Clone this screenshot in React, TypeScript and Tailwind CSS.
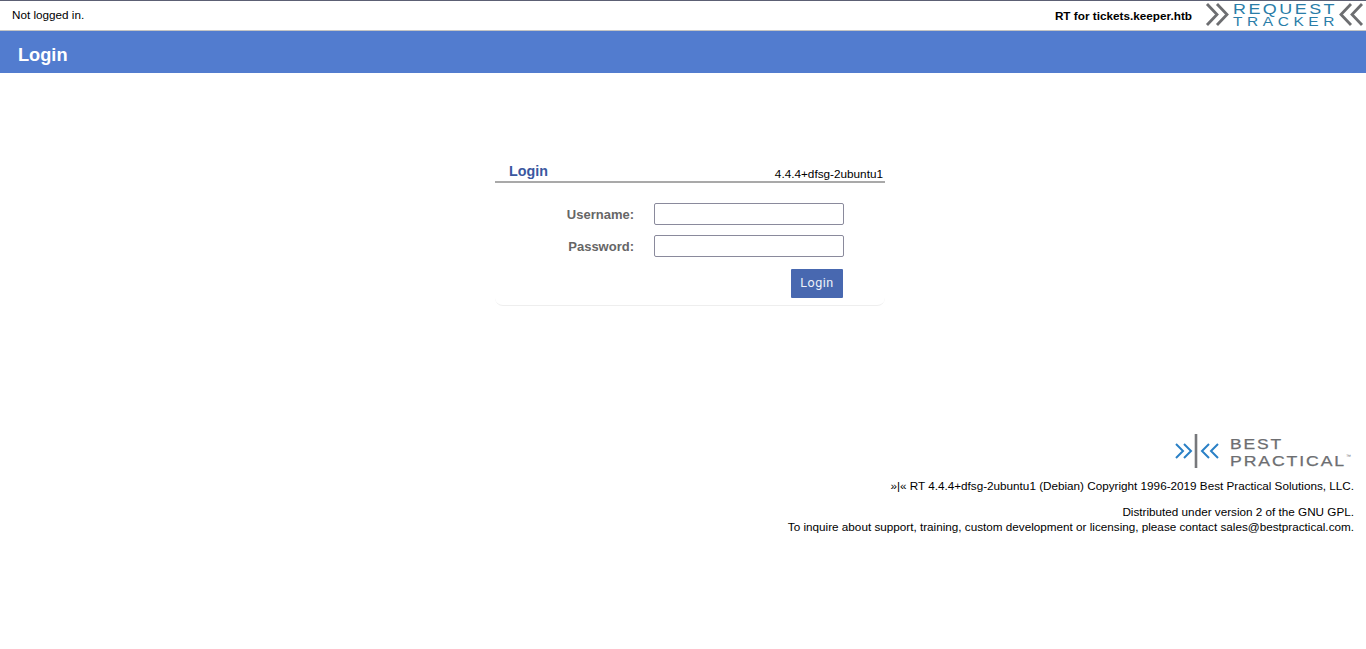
export default function App() {
  return (
    <div className="min-h-[649px] bg-white font-['Liberation_Sans',Arial,sans-serif] text-black">
      {/* Top bar */}
      <div className="flex h-[31px] items-start justify-between border-t border-b border-t-[#5c6074] border-b-[#c4c4c4] bg-white">
        <div className="ml-3 mt-[7px] text-[11.7px] leading-[14px]">Not logged in.</div>
        <div className="flex items-start">
          <div className="mt-2 text-[11.75px] font-bold leading-[14px]">RT for tickets.keeper.htb</div>
          <svg width="161" height="29" viewBox="0 0 161 29" className="ml-[13px] shrink-0" fill="none">
            <g stroke="#6d6e71" strokeWidth="2.8">
              <path d="M2 3 12 13.5 2 24" />
              <path d="M12 3 22 13.5 12 24" />
              <path d="M146 3 136 13.5 146 24" />
              <path d="M157 3 147 13.5 157 24" />
            </g>
            <g fill="#2a7da8" fontFamily="'Liberation Sans', sans-serif">
              <text x="28" y="13" fontSize="14.5" letterSpacing="2" textLength="104" lengthAdjust="spacingAndGlyphs">REQUEST</text>
              <text x="28" y="25" fontSize="13.5" letterSpacing="4" textLength="106" lengthAdjust="spacingAndGlyphs">TRACKER</text>
            </g>
          </svg>
        </div>
      </div>

      {/* Page title */}
      <div className="h-[42px] bg-[#527ccf] pl-[18px] pt-[13px] text-[18.2px] font-bold leading-[22px] text-white">Login</div>

      {/* Login box */}
      <div className="ml-[495px] mt-[89px] w-[390px]">
        <div className="flex h-[21px] items-end justify-between border-b-2 border-[#a9a9a9] pl-[14px] pr-[2px]">
          <span className="mb-[1px] text-[14.3px] font-bold leading-[18px] text-[#3a57a0]">Login</span>
          <span className="text-[11.75px] leading-[14px]">4.4.4+dfsg-2ubuntu1</span>
        </div>
        <div className="h-[123px] rounded-b-lg border-b border-[#eeeeee] pt-[20px]">
          <div className="flex h-[22px] items-center">
            <label className="mt-[2px] w-[139px] text-right text-[13px] font-bold text-[#666666]">Username:</label>
            <input type="text" className="ml-5 h-[22px] w-[190px] rounded-[2px] border border-[#8a8a9c] bg-white" />
          </div>
          <div className="mt-[10px] flex h-[22px] items-center">
            <label className="mt-[2px] w-[139px] text-right text-[13px] font-bold text-[#666666]">Password:</label>
            <input type="password" className="ml-5 h-[22px] w-[190px] rounded-[2px] border border-[#8a8a9c] bg-white" />
          </div>
          <div className="mt-3 flex justify-end pr-[42px]">
            <button type="button" className="h-[29px] w-[52px] rounded-[1px] bg-[#4868b0] font-['Roboto',sans-serif] text-[12.5px] tracking-[0.5px] text-[#eef1f8]">Login</button>
          </div>
        </div>
      </div>

      {/* Footer */}
      <div className="mt-[128px] pr-3 text-right text-[11.71px] leading-[15px]">
        <div className="flex justify-end">
          <svg width="179" height="34" viewBox="0 0 179 34" fill="none" className="shrink-0 overflow-visible">
            <path d="M1 10 8 17 1 24M9 10 16 17 9 24" stroke="#2a80c6" strokeWidth="2" />
            <path d="M21 0V34" stroke="#77787b" strokeWidth="2.6" />
            <path d="M34 10 27 17 34 24M43 10 36 17 43 24" stroke="#2a80c6" strokeWidth="2" />
            <g fill="#6d6e71" stroke="#6d6e71" strokeWidth="0.25" fontFamily="'Liberation Sans', sans-serif">
              <text x="55" y="15" fontSize="14" letterSpacing="1.5" textLength="53" lengthAdjust="spacingAndGlyphs">BEST</text>
              <text x="55" y="32" fontSize="14" letterSpacing="1.5" textLength="116" lengthAdjust="spacingAndGlyphs">PRACTICAL</text>
            </g>
            <text x="171" y="24" fontSize="5" fill="#6d6e71" fontFamily="'Liberation Sans', sans-serif">™</text>
          </svg>
        </div>
        <p className="mt-[10px]">»|« RT 4.4.4+dfsg-2ubuntu1 (Debian) Copyright 1996-2019 Best Practical Solutions, LLC.</p>
        <p className="mt-[11px]">Distributed under version 2 of the GNU GPL.</p>
        <p>To inquire about support, training, custom development or licensing, please contact sales@bestpractical.com.</p>
      </div>
    </div>
  );
}
